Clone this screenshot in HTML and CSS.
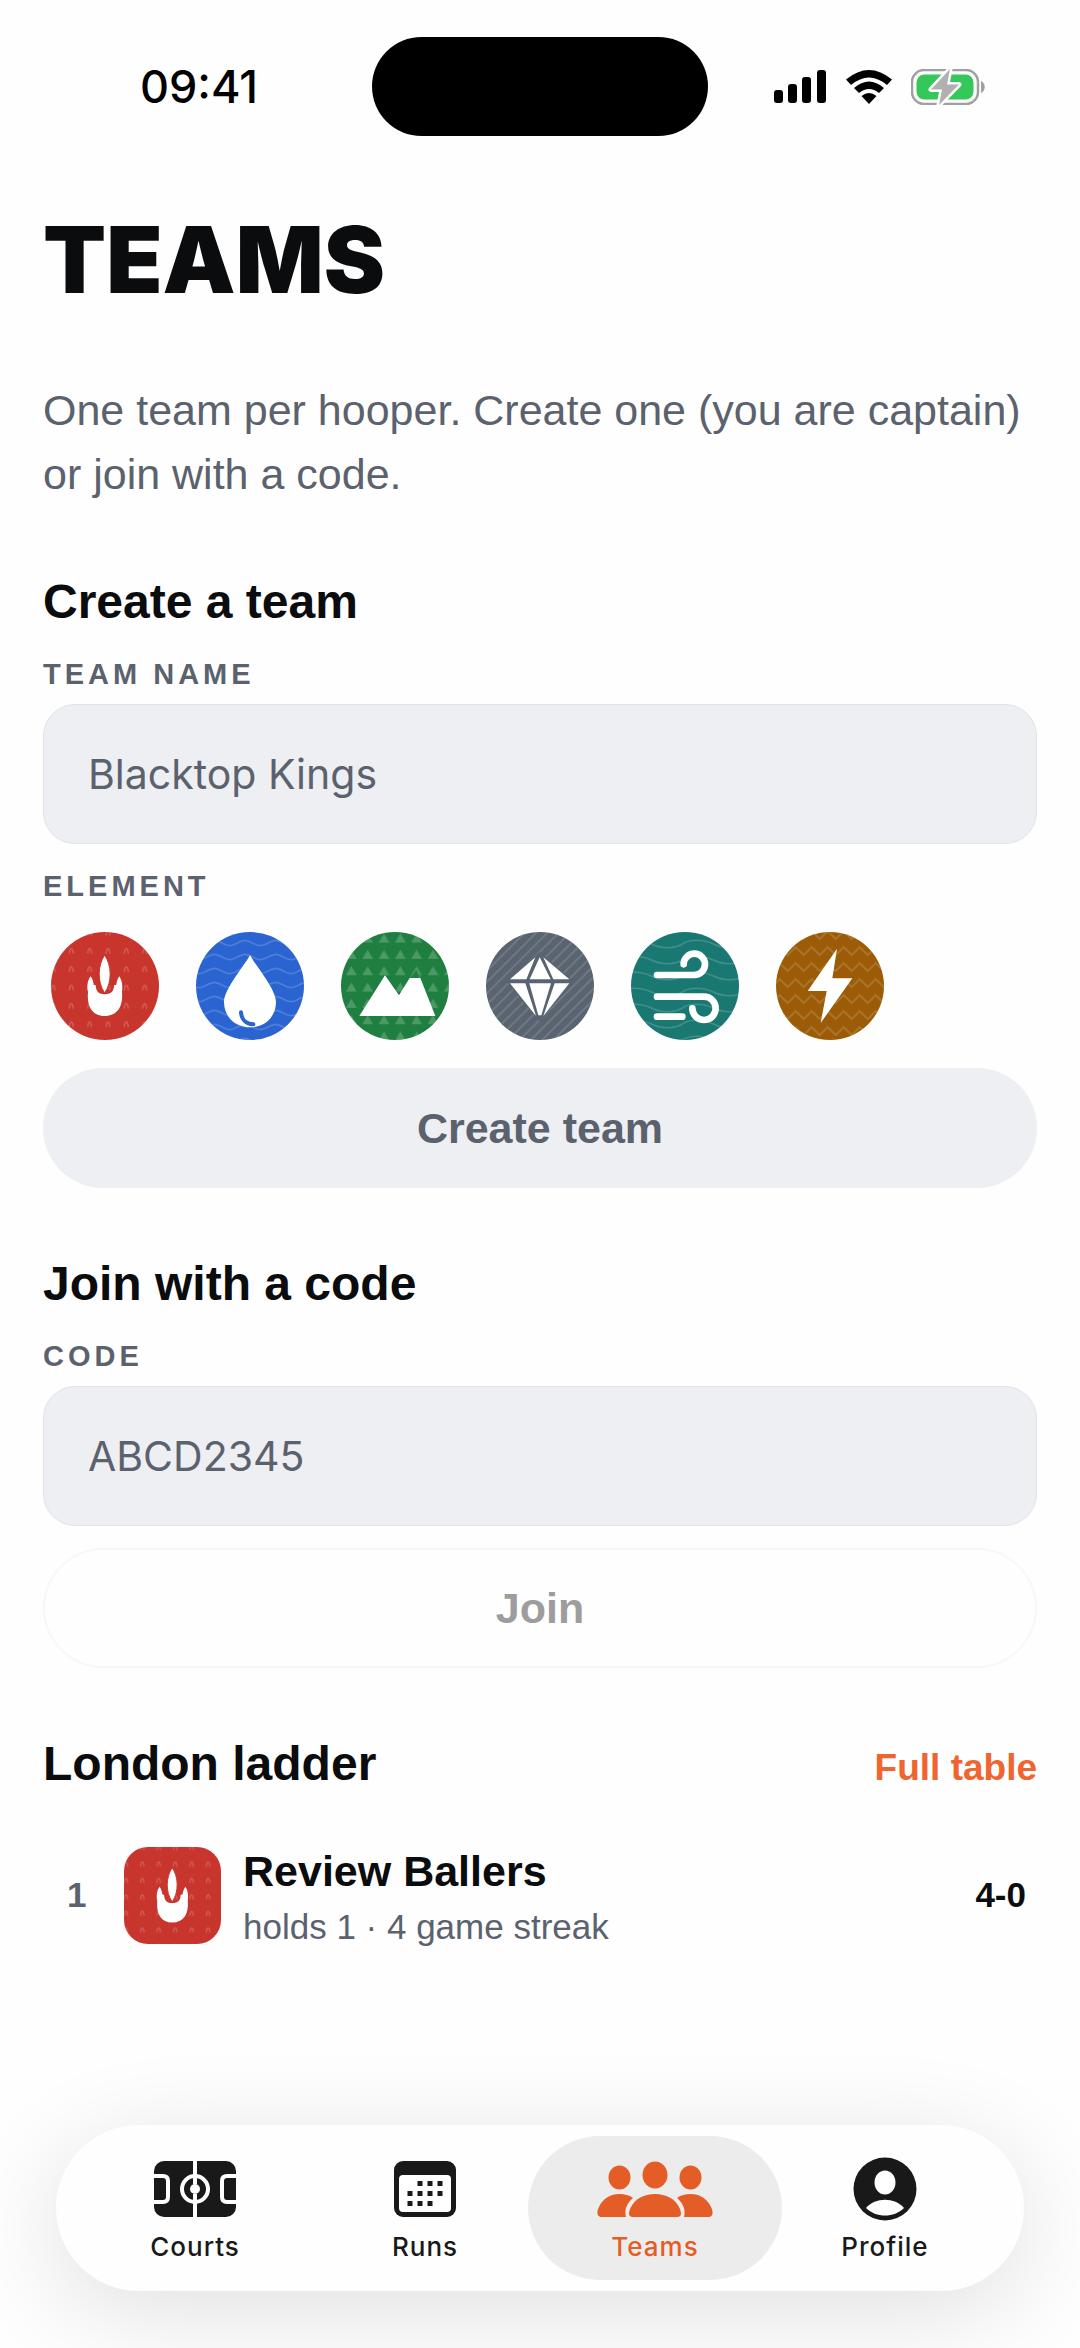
FILE: index.html
```html
<!DOCTYPE html>
<html lang="en">
<head>
  <meta charset="UTF-8">
  <meta name="viewport" content="width=device-width, initial-scale=1.0">
  <title>Teams</title>
  <link rel="stylesheet" href="styles.css">
</head>
<body>
  <!-- shared patterns and symbols -->
  <svg class="defs" width="0" height="0" aria-hidden="true">
    <defs>
      <pattern id="p-fire" x="34" y="40" width="55" height="55" patternUnits="userSpaceOnUse">
        <path d="M21 25C22 15 24 10 27 10S32 15 33 25" fill="none" stroke="#fff" stroke-opacity=".22" stroke-width="4"/>
      </pattern>
      <pattern id="p-water" x="9" y="12" width="92" height="42" patternUnits="userSpaceOnUse">
        <path d="M-23 13C-8 13 -15 29 0 29S31 13 46 13S77 29 92 29S108 13 115 13" fill="none" stroke="#fff" stroke-opacity=".17" stroke-width="5"/>
      </pattern>
      <pattern id="p-earth" x="7" y="0" width="49" height="49" patternUnits="userSpaceOnUse">
        <path d="M24 4L40 32H8Z" fill="#fff" fill-opacity=".2"/>
      </pattern>
      <pattern id="p-metal" width="24" height="24" patternUnits="userSpaceOnUse" patternTransform="rotate(45)">
        <path d="M12 0V24" stroke="#fff" stroke-opacity=".15" stroke-width="5"/>
      </pattern>
      <pattern id="p-air" x="-32" y="12" width="186" height="48" patternUnits="userSpaceOnUse">
        <path d="M0 24C20 10 60 8 93 24S166 38 186 24" fill="none" stroke="#fff" stroke-opacity=".17" stroke-width="5"/>
      </pattern>
      <pattern id="p-bolt" x="11" y="33" width="48" height="48" patternUnits="userSpaceOnUse">
        <path d="M-4 8L0 12L24 36L48 12L52 8" fill="none" stroke="#fff" stroke-opacity=".17" stroke-width="5"/>
      </pattern>
      <symbol id="flame" viewBox="0 0 324 324">
        <path d="M119 133C110 145 107 160 111 180C107 225 125 252 161 252C198 252 217 225 213 180C216 160 213 145 205 133C200 140 197 148 196 158L189 160C189 175 183 187 161 187C140 187 135 175 134 160L128 158C127 148 124 140 119 133Z"/>
        <path d="M161 69C140 100 138 150 161 183C184 150 182 100 161 69Z" stroke="#c8352d" stroke-width="3"/>
      </symbol>
    </defs>
  </svg>

  <header class="statusbar">
    <time class="clock">09:41</time>
    <div class="island"></div>
    <div class="status-icons">
      <svg width="54" height="34" viewBox="0 0 54 34" aria-label="Signal">
        <rect x="1" y="20" width="9" height="13" rx="3"/>
        <rect x="15" y="14" width="9" height="19" rx="3"/>
        <rect x="29" y="7" width="9" height="26" rx="3"/>
        <rect x="44" y="0" width="9" height="33" rx="3"/>
      </svg>
      <svg width="46" height="34" viewBox="0 0 46 34" aria-label="Wi-Fi">
        <path d="M0 9.500Q23 -9.500 46 9.500L41 15Q23 0 5 15Z"/>
        <path d="M8 18Q23 5 38 18L33 23Q23 15 13 23Z"/>
        <path d="M15.500 26Q23 20 30.500 26L23 34Z"/>
      </svg>
      <svg width="74" height="36" viewBox="0 0 74 36" aria-label="Battery charging">
        <rect x="1" y="1" width="66" height="34" rx="12" fill="none" stroke="#a0a0a0" stroke-width="2.500"/>
        <rect x="5.500" y="5.500" width="57" height="25" rx="8" fill="#34c759"/>
        <path d="M70 12C75 14 75 22 70 24Z" fill="#a0a0a0"/>
        <path d="M39 0L20 20.500H31L28 36L48 15.500H36Z" fill="#b0b0b0" stroke="#fff" stroke-width="5" stroke-linejoin="round" paint-order="stroke"/>
      </svg>
    </div>
  </header>

  <main class="content">
    <h1>TEAMS</h1>
    <p class="intro">One team per hooper. Create one (you are captain) or join with a code.</p>

    <section>
      <h2>Create a team</h2>
      <label class="label" for="teamName">TEAM NAME</label>
      <input type="text" id="teamName" placeholder="Blacktop Kings">
      <div class="label" id="elementLabel">ELEMENT</div>
      <div class="elements" role="group" aria-labelledby="elementLabel">
        <button type="button" class="element fire" aria-label="Fire">
          <svg viewBox="0 0 324 324">
            <rect width="324" height="324" fill="url(#p-fire)"/>
            <use href="#flame" fill="#fff"/>
          </svg>
        </button>
        <button type="button" class="element water" aria-label="Water">
          <svg viewBox="0 0 324 324">
            <rect width="324" height="324" fill="url(#p-water)"/>
            <path fill="#fff" d="M162 69C150 95 84 170 84 210C84 255 118 286 162 286C206 286 240 255 240 210C240 170 174 95 162 69Z"/>
            <path d="M135 241C136 262 150 276 172 277" fill="none" stroke="#2a64d0" stroke-width="12" stroke-linecap="round"/>
          </svg>
        </button>
        <button type="button" class="element earth" aria-label="Earth">
          <svg viewBox="0 0 324 324">
            <rect width="324" height="324" fill="url(#p-earth)"/>
            <path fill="#fff" d="M55 252L132 130L174 190L206 138H238L283 252Z"/>
            <path d="M208 136L226 112L238 138" fill="#1f7f40" stroke="#4c9966" stroke-width="3"/>
          </svg>
        </button>
        <button type="button" class="element metal" aria-label="Metal">
          <svg viewBox="0 0 324 324">
            <rect width="324" height="324" fill="url(#p-metal)"/>
            <path d="M161 60L262 148L161 268L60 148Z" fill="#5a6470"/>
            <path fill="#fff" d="M72 142L148 76L121 142ZM161 76L131 142H194ZM172 76L202 142H250ZM72 154H118L150 252ZM130 154H195L166 250H157ZM250 154H206L172 252Z"/>
          </svg>
        </button>
        <button type="button" class="element air" aria-label="Air">
          <svg viewBox="0 0 324 324">
            <rect width="324" height="324" fill="url(#p-air)"/>
            <path d="M78 129H190A32 32 0 1 0 158 97M78 194H219A35 35 0 1 1 184 229M78 254H154" fill="none" stroke="#fff" stroke-width="20" stroke-linecap="round"/>
          </svg>
        </button>
        <button type="button" class="element lightning" aria-label="Lightning">
          <svg viewBox="0 0 324 324">
            <rect width="324" height="324" fill="url(#p-bolt)"/>
            <path fill="#fff" d="M183 50L169 139H229L134 273L152 177H95Z"/>
          </svg>
        </button>
      </div>
      <button type="button" class="btn btn-create">Create team</button>
    </section>

    <section>
      <h2>Join with a code</h2>
      <label class="label" for="code">CODE</label>
      <input type="text" id="code" placeholder="ABCD2345">
      <button type="button" class="btn btn-join" disabled>Join</button>
    </section>

    <section>
      <div class="ladder-head">
        <h2>London ladder</h2>
        <a href="#">Full table</a>
      </div>
      <div class="team">
        <span class="rank">1</span>
        <div class="badge fire">
          <svg viewBox="0 0 324 324">
            <rect width="324" height="324" fill="url(#p-fire)"/>
            <use href="#flame" fill="#fff"/>
          </svg>
        </div>
        <div class="team-info">
          <div class="team-name">Review Ballers</div>
          <div class="team-sub">holds 1 · 4 game streak</div>
        </div>
        <span class="score">4-0</span>
      </div>
    </section>
  </main>

  <nav class="tabbar">
    <a href="#" class="tab">
      <svg width="82" height="64" viewBox="0 0 82 64">
        <rect y="4" width="82" height="56" rx="10" fill="#191919"/>
        <path d="M41 3V27M41 37V61M0 19H9Q14 19 14 24V40Q14 45 9 45H0M82 19H73Q68 19 68 24V40Q68 45 73 45H82" fill="none" stroke="#fff" stroke-width="4"/>
        <circle cx="41" cy="32" r="13" fill="none" stroke="#fff" stroke-width="4"/>
        <circle cx="41" cy="32" r="5" fill="#fff"/>
      </svg>
      <span>Courts</span>
    </a>
    <a href="#" class="tab">
      <svg width="62" height="64" viewBox="0 0 62 64">
        <rect y="4" width="62" height="56" rx="9" fill="#191919"/>
        <rect x="5" y="18" width="52" height="37" rx="4" fill="#fff"/>
        <path d="M23.500 26.500H51M13.500 36.500H51M13.500 46.500H41" fill="none" stroke="#191919" stroke-width="5" stroke-dasharray="5 5"/>
      </svg>
      <span>Runs</span>
    </a>
    <a href="#" class="tab active" aria-current="page">
      <svg width="116" height="64" viewBox="0 0 116 64" fill="#e55d26">
        <ellipse cx="58" cy="18" rx="12.500" ry="13.500"/>
        <ellipse cx="22.500" cy="20.500" rx="11" ry="12"/>
        <ellipse cx="93.500" cy="20.500" rx="11" ry="12"/>
        <path d="M36 60C30 60 32 54 34 50C38 42 47 37 58 37S78 42 82 50C84 54 86 60 80 60Z"/>
        <path d="M5 60C-1 60 0 54 2 50C6 41 14 37 22 37C28 37 32 38 36 41C30 46 27 53 29 60Z"/>
        <path d="M111 60C117 60 116 54 114 50C110 41 102 37 94 37C88 37 84 38 80 41C86 46 89 53 87 60Z"/>
      </svg>
      <span>Teams</span>
    </a>
    <a href="#" class="tab">
      <svg width="64" height="64" viewBox="0 0 64 64">
        <circle cx="32" cy="32" r="31.500" fill="#191919"/>
        <ellipse cx="32" cy="25.500" rx="10.500" ry="12" fill="#fff"/>
        <path d="M13 51C22 40 42 40 51 51C41 61 23 61 13 51Z" fill="#fff"/>
      </svg>
      <span>Profile</span>
    </a>
  </nav>
</body>
</html>
```
FILE: styles.css
```css
* {
  box-sizing: border-box;
}
body {
  margin: 0;
  min-height: 100vh;
  display: flex;
  flex-direction: column;
  background-color: #fefefe;
  color: #0b0c0e;
  font-family: "Liberation Sans", Arial, sans-serif;
  overflow-x: hidden;
}
.defs {
  position: absolute;
}
h1, h2, p {
  margin: 0;
}
button, input {
  font-family: inherit;
}

/* status bar */
.statusbar {
  display: grid;
  grid-template-columns: 1fr 336px 1fr;
  align-items: center;
  padding-top: 37px;
}
.clock {
  padding-left: 26px;
  text-align: center;
  font-family: Inter, sans-serif;
  font-size: 45px;
  font-weight: 500;
  color: #000;
}
.island {
  height: 99px;
  border-radius: 50px;
  background-color: #000;
}
.status-icons {
  display: flex;
  align-items: center;
  gap: 19px;
  padding-left: 65px;
}

/* content */
.content {
  padding: 0 43px;
}
h1 {
  margin-top: 72px;
  font-family: Inter, sans-serif;
  font-size: 92px;
  font-weight: 900;
  line-height: 104px;
}
.intro {
  margin-top: 66px;
  font-size: 43px;
  line-height: 64px;
  color: #5b626e;
}
h2 {
  font-size: 48px;
  line-height: 60px;
}
section {
  display: flex;
  flex-direction: column;
  margin-top: 66px;
}
.label {
  margin-top: 26px;
  font-size: 29px;
  font-weight: bold;
  line-height: 32px;
  letter-spacing: 4px;
  color: #5b626e;
}
input {
  width: 100%;
  height: 140px;
  margin-top: 14px;
  padding: 0 44px;
  border: 1px solid #dfe3e8;
  border-radius: 32px;
  background-color: #eeeff3;
  font-family: Inter, sans-serif;
  font-size: 41px;
}
input::placeholder {
  color: #5b626e;
  opacity: 1;
}
.elements {
  display: flex;
  gap: 37px;
  margin-top: 30px;
  padding: 0 8px;
}
.element {
  width: 108px;
  height: 108px;
  padding: 0;
  border: none;
  border-radius: 50%;
  overflow: hidden;
  cursor: pointer;
}
.element svg, .badge svg {
  display: block;
  width: 100%;
  height: 100%;
}
.fire { background-color: #c8352d; }
.water { background-color: #2a64d0; }
.earth { background-color: #1f7f40; }
.metal { background-color: #5a6470; }
.air { background-color: #1a7872; }
.lightning { background-color: #9c5c07; }

.btn {
  width: 100%;
  height: 120px;
  border: none;
  border-radius: 60px;
  font-size: 43px;
  font-weight: bold;
}
.btn-create {
  margin-top: 28px;
  background-color: #eeeff3;
  color: #5b626e;
}
.btn-join {
  margin-top: 22px;
  border: 2px solid #f7f7f7;
  background-color: #fefefe;
  color: #9d9d9d;
}

/* ladder */
.ladder-head {
  display: flex;
  justify-content: space-between;
  align-items: baseline;
}
.ladder-head a {
  color: #f0652f;
  font-size: 37px;
  font-weight: bold;
  text-decoration: none;
}
.team {
  display: flex;
  align-items: center;
  margin-top: 41px;
  padding: 0 11px 0 24px;
}
.rank {
  width: 57px;
  font-size: 35px;
  font-weight: bold;
  color: #5b626e;
}
.badge {
  width: 97px;
  height: 97px;
  border-radius: 24px;
  overflow: hidden;
}
.team-info {
  flex: 1;
  padding: 8px 0 0 22px;
}
.team-name {
  font-size: 43px;
  font-weight: bold;
  line-height: 56px;
}
.team-sub {
  font-size: 35px;
  line-height: 56px;
  color: #5b626e;
}
.score {
  font-size: 35px;
  font-weight: bold;
}

/* tab bar */
.tabbar {
  display: flex;
  margin: auto 56px 57px;
  padding: 11px 24px;
  border-radius: 83px;
  background-color: #fefefe;
  box-shadow: 0 20px 100px rgba(0, 0, 0, 0.12);
}
.tab {
  flex: 1;
  display: flex;
  flex-direction: column;
  align-items: center;
  height: 144px;
  padding-top: 21px;
  border-radius: 72px;
  font-family: Inter, sans-serif;
  font-size: 26px;
  font-weight: 500;
  line-height: 34px;
  letter-spacing: 1px;
  color: #191919;
  text-decoration: none;
}
.tab span {
  margin-top: 9px;
}
.tab.active {
  margin: 0 -12px;
  padding-left: 12px;
  padding-right: 12px;
  background-color: #ececec;
  color: #e55d26;
}
```
